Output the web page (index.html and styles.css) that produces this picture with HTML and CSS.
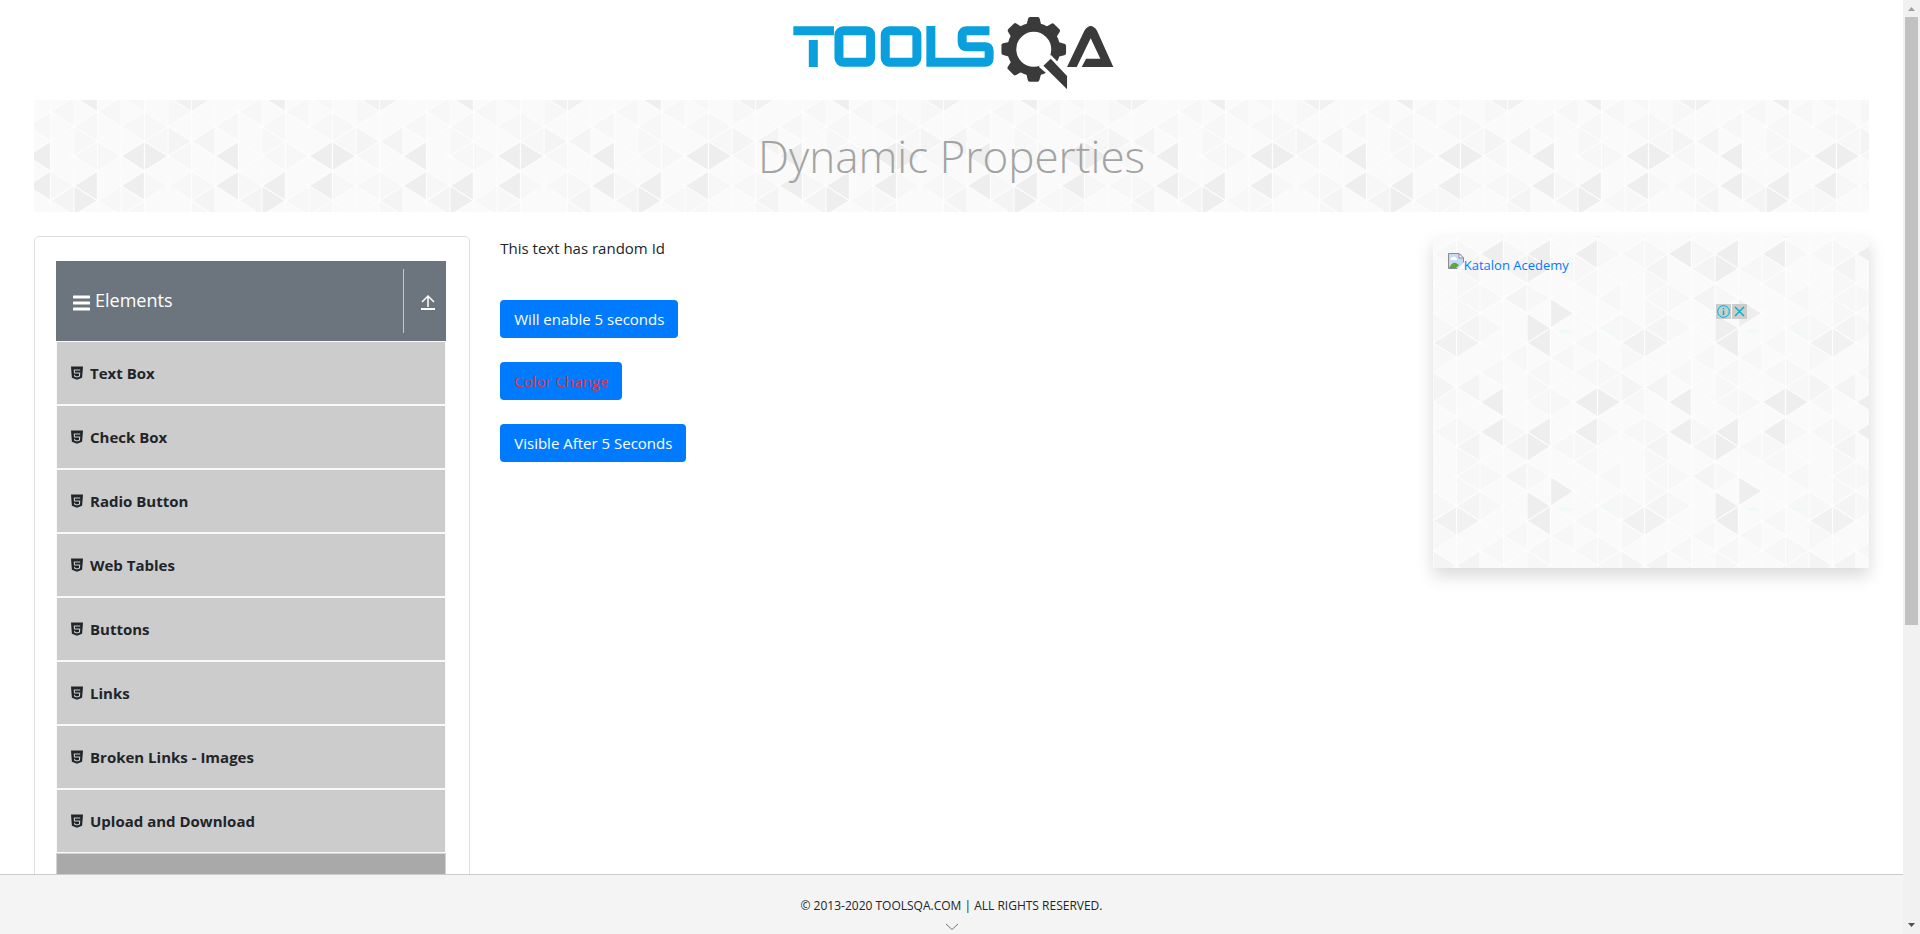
FILE: index.html
```html
<!DOCTYPE html>
<html lang="en">
<head>
<meta charset="utf-8">
<title>ToolsQA</title>
<link rel="stylesheet" href="styles.css">
</head>
<body>
<svg class="defs" aria-hidden="true">
  <symbol id="html5" viewBox="0 0 12 14">
    <path fill="currentColor" d="M0 .5h12l-.9 11.200L6 13.800l-5.100-2.100z"/>
    <path fill="none" stroke="#ccc" stroke-width="1.100" d="M9.200 4H3.300l.2 3h5.200l-.3 3.200-2.400.8-2.400-.8-.1-1.300"/>
  </symbol>
</svg>
<div class="window">
  <div class="page">
    <header class="top">
      <a href="#" aria-label="ToolsQA home">
        <svg class="logo" viewBox="38 0 964 300" aria-hidden="true">
          <g fill="none" stroke="#0a9fdd" stroke-width="27">
            <path d="M39 92H161M99 120V201"/>
            <rect x="176" y="92" width="95" height="95" rx="13"/>
            <rect x="315" y="92" width="95" height="95" rx="13"/>
            <path d="M452 78V187H615Q627 187 627 175V152Q627 140 615 140H560Q546 140 546 127V106Q546 92 560 92H628"/>
          </g>
          <g fill="#3b3a3a">
            <circle cx="761" cy="148" r="66" fill="none" stroke="#3b3a3a" stroke-width="27"/>
            <path id="tooth" d="M738 78L744 56Q745 51 750 51H773Q778 51 779 56L784 78Z"/>
            <use href="#tooth" transform="rotate(45 761 148)"/>
            <use href="#tooth" transform="rotate(90 761 148)"/>
            <use href="#tooth" transform="rotate(180 761 148)"/>
            <use href="#tooth" transform="rotate(225 761 148)"/>
            <use href="#tooth" transform="rotate(270 761 148)"/>
            <use href="#tooth" transform="rotate(315 761 148)"/>
            <path fill="#fff" d="M776 200L812 164L880 234V290Z"/>
            <path d="M790 197L812 176L861 228V268Z"/>
            <path d="M861 201L913 92Q932 64 951 92L1000 201H905L918 176H961L932 115L890 201Z"/>
          </g>
        </svg>
      </a>
    </header>
    <h1 class="banner pattern">Dynamic Properties</h1>
    <div class="columns">
      <nav class="sidebar" aria-label="Elements">
        <button class="group" type="button">
          <svg width="17" height="16" viewBox="0 0 17 16" aria-hidden="true"><path d="M1 2H16M1 8H16M1 14H16" stroke="#fff" stroke-width="3" stroke-linecap="round"/></svg>
          <span class="group-name">Elements</span>
          <span class="toggle">
            <svg width="16" height="17" viewBox="0 0 16 17" fill="none" stroke="#fff" aria-hidden="true"><path d="M1 15H15" stroke-width="2"/><path d="M8 13V2M2 8L8 2L14 8" stroke-width="1.500"/></svg>
          </span>
        </button>
        <ul class="menu">
          <li><a href="#"><svg class="ico"><use href="#html5"/></svg>Text Box</a></li>
          <li><a href="#"><svg class="ico"><use href="#html5"/></svg>Check Box</a></li>
          <li><a href="#"><svg class="ico"><use href="#html5"/></svg>Radio Button</a></li>
          <li><a href="#"><svg class="ico"><use href="#html5"/></svg>Web Tables</a></li>
          <li><a href="#"><svg class="ico"><use href="#html5"/></svg>Buttons</a></li>
          <li><a href="#"><svg class="ico"><use href="#html5"/></svg>Links</a></li>
          <li><a href="#"><svg class="ico"><use href="#html5"/></svg>Broken Links - Images</a></li>
          <li><a href="#"><svg class="ico"><use href="#html5"/></svg>Upload and Download</a></li>
          <li class="active"></li>
        </ul>
      </nav>
      <main class="content">
        <p>This text has random Id</p>
        <button class="btn" type="button">Will enable 5 seconds</button>
        <button class="btn danger" type="button">Color Change</button>
        <button class="btn" type="button">Visible After 5 Seconds</button>
      </main>
      <aside class="promo pattern">
        <a class="promo-link" href="#">
          <svg width="16" height="16" viewBox="0 0 16 16" aria-hidden="true">
            <path d="M.5.5H11L15.500 5V10L10 15.500H.5Z" fill="#c9d8f5" stroke="#8b8b8b"/>
            <path d="M11 .5V5H15.500Z" fill="#fff" stroke="#8b8b8b"/>
            <path d="M3 7a2 2 0 0 1 2-3a2 2 0 0 1 3 1a1 1 0 0 1 0 2z" fill="#fff"/>
            <path d="M1 15Q4 9 8 10L11 12L8 15Z" fill="#58a83a"/>
            <path d="M9 16L16 9V16Z" fill="#fff"/>
          </svg><span>Katalon Acedemy</span>
        </a>
        <div class="ad">
          <button type="button" aria-label="Ad info"><svg viewBox="0 0 15 15" fill="none" stroke="#00aecd"><circle cx="7.500" cy="7.500" r="5.800"/><path d="M7.500 6.500V11M7.500 4V5.300" stroke-width="1.500"/></svg></button>
          <button type="button" aria-label="Close ad"><svg viewBox="0 0 15 15" fill="none" stroke="#00aecd" stroke-width="1.400"><path d="M3 3L12 12M12 3L3 12"/></svg></button>
        </div>
      </aside>
    </div>
  </div>
  <footer class="footer">
    <span>© 2013-2020 TOOLSQA.COM | ALL RIGHTS RESERVED.</span>
    <svg width="14" height="8" viewBox="0 0 14 8" fill="none" stroke="#777" aria-hidden="true"><path d="M1 1L7 6.500L13 1"/></svg>
  </footer>
  <div class="scrollbar" aria-hidden="true">
    <svg viewBox="0 0 17 17" fill="#a0a0a0"><path d="M5 11L8.500 7L12 11Z"/></svg>
    <div class="track"><div class="thumb"></div></div>
    <svg viewBox="0 0 17 17" fill="#505050"><path d="M5 6L8.500 10L12 6Z"/></svg>
  </div>
</div>
</body>
</html>
```
FILE: styles.css
```css
* { box-sizing: border-box; }
body {
  margin: 0;
  font-family: "Open Sans", "Noto Sans", sans-serif;
  font-size: 15px;
  line-height: 24px;
  color: #212529;
  background: #fff;
}
a { color: inherit; text-decoration: none; }
button { font: inherit; border: 0; padding: 0; cursor: pointer; }
svg { display: block; }
.defs { display: none; }

.window {
  display: grid;
  grid-template: minmax(0, 1fr) 60px / minmax(0, 1fr) 17px;
  height: 100vh;
}
.page { overflow: hidden; padding: 0 34px; }
.top { display: flex; justify-content: center; padding-left: 4px; }
.logo { width: 321px; height: 100px; }

/* 8 by 12 lattice of triangles, one unit per column and half row */
.pattern {
  background-color: #fafafa;
  background-size: 188px 178px;
  background-image: url("data:image/svg+xml,%3Csvg xmlns='http://www.w3.org/2000/svg' width='188' height='178' viewBox='0 0 8 12' preserveAspectRatio='none'%3E%3Cpath fill='%23fafafa' d='M0 0h8v12H0z'/%3E%3Cpath fill='%23f7f7f7' d='M0 1l1-1v2zM2 3l-1-1v2zM3 4l-1-1v2zM5 4l-1-1v2zM6 3l1-1v2zM7 4l1-1v2zM7 6l1-1v2zM6 7l1-1v2zM5 8l1-1v2zM3 8l1-1v2zM2 9l1-1v2zM4 9l1-1v2zM6 9l1-1v2zM7 10l1-1v2zM4 11l1-1v2zM2 5l-1-1v2zM1 8l-1-1v2zM6 11l-1-1v2zM8 1l-1-1v2zM4 1l-1-1v2zM7 2l-1-1v2zM1 6l-1-1v2zM3 6l-1-1v2zM5 10l-1-1v2zM8 9l-1-1v2zM0 11l1-1v2zM1 4l1-1v2zM5 2l1-1v2zM2 1l-1-1v2z'/%3E%3Cpath fill='%23f4f4f4' d='M1 10l-1-1v2zM1 10l1-1v2zM1 2l1-1v2zM1 6l1-1v2zM3 4l1-1v2zM3 2l1-1v2z'/%3E%3Cpath fill='%23f1f1f1' d='M0 7l1-1v2zM2 7l-1-1v2z'/%3E%3Cpath fill='%23eeeeee' d='M2 11l1-1v2zM2 1l1-1v2zM4 1l1-1v2zM5 2l-1-1v2zM6 1l1-1v2zM6 11l1-1v2zM8 11l-1-1v2zM5 6l-1-1v2zM4 7l1-1v2zM6 5l-1-1v2z'/%3E%3Cpath fill='%23ebfbfb' d='M5.300 6.200l.3-.1.3.1v.1h-.5zM7.200 6.200l.3-.1.4.1-.3.1z'/%3E%3Cpath fill='none' stroke='%23fdfdfd' stroke-width='1.300' vector-effect='non-scaling-stroke' d='M0 0v12M1 0v12M2 0v12M3 0v12M4 0v12M5 0v12M6 0v12M7 0v12M8 0v12M0 1l8-8M0 3l8-8M0 5l8-8M0 7l8-8M0 9l8-8M0 11l8-8M0 13l8-8M0 15l8-8M0 17l8-8M0 19l8-8M0-7l8 8M0-5l8 8M0-3l8 8M0-1l8 8M0 1l8 8M0 3l8 8M0 5l8 8M0 7l8 8M0 9l8 8M0 11l8 8'/%3E%3C/svg%3E");
}
.banner {
  margin: 0 0 24px;
  padding: 20px 0 20px;
  background-position: -54px -107px;
  color: #a3a3a3;
  font-size: 44px;
  font-weight: 300;
  line-height: 72px;
  text-align: center;
}
.columns {
  display: grid;
  grid-template-columns: repeat(12, minmax(0, 1fr));
  column-gap: 30px;
  align-items: start;
}

.sidebar {
  grid-column: span 3;
  padding: 24px 23px 24px 21px;
  border: 1px solid #dfdfdf;
  border-radius: 5px;
}
.group {
  display: flex;
  align-items: center;
  width: 100%;
  height: 80px;
  padding: 8px 0 8px 17px;
  background: #6c757d;
  color: #fff;
  font-size: 18px;
  text-align: left;
}
.group > svg { margin-top: 3px; }
.group-name { flex: 1; padding: 0 0 2px 5px; }
.toggle {
  display: flex;
  align-items: center;
  justify-content: flex-end;
  align-self: stretch;
  width: 43px;
  padding: 3px 10px 0 0;
  border-left: 1px solid #c4c8cb;
}
.menu { margin: 0; padding: 0; list-style: none; }
.menu li {
  height: 64px;
  border: 1px solid #f8f9fa;
  background: #ccc;
}
.menu a {
  display: flex;
  align-items: center;
  gap: 7px;
  height: 100%;
  padding-left: 14px;
  font-weight: 700;
}
.menu .active { border-color: #ced4da; background: #a9a9a9; }
.ico { width: 12px; height: 14px; }

.content {
  grid-column: span 6;
  display: flex;
  flex-direction: column;
  align-items: flex-start;
  gap: 24px;
}
.content p { margin: 0 0 16px; }
.btn {
  height: 38px;
  padding: 0 14px;
  border-radius: 4px;
  background: #007bff;
  color: #fff;
}
.danger { color: #dc3545; }

.promo {
  grid-column: span 3;
  min-height: 332px;
  padding: 17px 15px;
  background-position: 0 3px;
  box-shadow: 0 8px 16px rgba(0, 0, 0, .15);
}
.promo-link {
  display: flex;
  align-items: flex-start;
  color: #007bff;
  font-size: 13px;
}
.ad {
  display: flex;
  justify-content: flex-end;
  gap: 1px;
  padding: 27px 107px 0 0;
}
.ad button { width: 15px; height: 15px; background: #ccc; }

.footer {
  grid-row: 2;
  display: flex;
  flex-direction: column;
  align-items: center;
  padding-top: 19px;
  border-top: 1px solid #ccc;
  background: #f4f4f4;
  font-size: 12px;
}
.footer svg { margin-top: 5px; }

.scrollbar {
  grid-area: 1 / 2 / 3 / 3;
  display: flex;
  flex-direction: column;
  background: #f1f1f1;
}
.track { flex: 1; padding: 0 2px; }
.thumb { height: 67.600%; background: #c1c1c1; }
```
